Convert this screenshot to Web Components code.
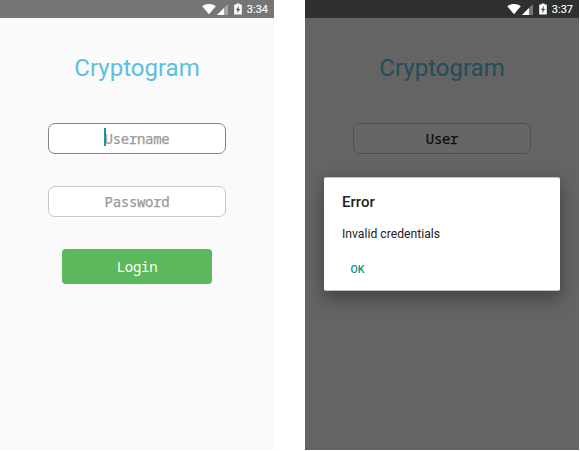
<!DOCTYPE html>
<html lang="en">
<head>
<meta charset="utf-8">
<title>Cryptogram</title>
<style>
html,body{margin:0;background:#fff}
body{width:580px;height:451px;overflow:hidden;display:flex;gap:31px;font-family:Roboto,"Liberation Sans",sans-serif}
</style>
</head>
<body>
<phone-screen time="3:34">
  <app-title>Cryptogram</app-title>
  <text-field focused>Username</text-field>
  <text-field>Password</text-field>
  <push-button>Login</push-button>
</phone-screen>
<phone-screen time="3:37" dimmed>
  <app-title>Cryptogram</app-title>
  <text-field filled>User</text-field>
  <alert-dialog slot="dialog" heading="Error" action="OK">Invalid credentials</alert-dialog>
</phone-screen>
<script>
const define = (name, render) => customElements.define(name, class extends HTMLElement {
  constructor() {
    super();
    const t = document.createElement('template');
    t.innerHTML = render(this);
    this.attachShadow({mode: 'open'}).append(t.content.cloneNode(true));
  }
});

define('status-bar', el => `
<style>
:host{display:flex;height:18px;box-sizing:border-box;padding-right:6px;align-items:center;justify-content:flex-end;background:#757575;color:#fff;font-size:11px;line-height:18px}
:host([dark]){background:#2f2f2f}
svg{display:block;flex:none}
span{padding-top:1px;-webkit-text-stroke:.15px currentColor}
.wifi{margin-right:1px}.cell{margin-right:6px}.battery{margin-right:5px}
</style>
<svg class="wifi" width="14" height="12" viewBox="0 0 14 12"><path d="M.2 3.200C4 .3 10 .3 13.800 3.200L7 11.300z" fill="#fff"/></svg>
<svg class="cell" width="11" height="11" viewBox="0 0 11 11"><path d="M0 11L11 0V11z" fill="#fff" opacity=".35"/><path d="M0 11L7 4V11z" fill="#fff"/></svg>
<svg class="battery" width="8" height="12" viewBox="0 0 8 12"><path d="M2.500.5h3v1H7.200q.6 0 .6.6V10.900q0 .6-.6.6H.8q-.6 0-.6-.6V2.100q0-.6.6-.6H2.500z" fill="#fff"/><path d="M5 2.800L1.900 7H3.600L3.100 10.200L6.300 5.900H4.500z" fill="#555"/></svg>
<span>${el.getAttribute('time')}</span>`);

define('app-title', () => `
<style>:host{display:block;height:30px;line-height:30px;font-size:24px;color:#5bc0de;text-align:center;padding:35px 0 40px}</style>
<slot></slot>`);

define('text-field', () => `
<style>
:host{display:flex;align-items:center;justify-content:center;box-sizing:border-box;width:178px;height:31px;margin:0 auto 32px;border:1px solid #c8c8c8;border-radius:7px;background:#fff;color:#999;font:14px "Droid Sans Mono","Noto Sans Mono","DejaVu Sans Mono",monospace;letter-spacing:-.3px}
:host([focused]){border-color:#79848e}
:host([filled]){color:#222}
.text{position:relative;-webkit-text-stroke:.25px currentColor}
.caret{display:none;position:absolute;left:-1px;top:-1px;width:2px;height:18px;background:#159b8a}
:host([focused]) .caret{display:block}
</style>
<span class="text"><slot></slot><i class="caret"></i></span>`);

define('push-button', () => `
<style>:host{display:flex;align-items:center;justify-content:center;width:150px;height:35px;margin:0 auto;border-radius:4px;background:#5cb85c;color:#fff;font:14px "Droid Sans Mono","Noto Sans Mono","DejaVu Sans Mono",monospace;letter-spacing:-.3px}</style>
<slot></slot>`);

define('alert-dialog', el => `
<style>
:host{display:flex;flex-direction:column;align-items:flex-start;box-sizing:border-box;width:236px;height:114px;padding:15px 18px 0;background:#fff;border:solid #c4c4c4;border-width:1px 0;border-radius:2px;box-shadow:0 8px 18px rgba(0,0,0,.32),0 0 8px rgba(0,0,0,.08);color:#212121}
.h{font-weight:500;font-size:15px;line-height:18px}
.m{font-size:12.2px;line-height:16px;margin-top:15px}
.a{font-weight:500;font-size:10.5px;line-height:14px;color:#009688;margin:21px 0 0 8.5px}
</style>
<span class="h">${el.getAttribute('heading')}</span>
<span class="m"><slot></slot></span>
<span class="a">${el.getAttribute('action')}</span>`);

define('phone-screen', el => {
  const dimmed = el.hasAttribute('dimmed');
  return `
<style>
:host{display:block;position:relative;flex:none;width:274px;height:450px;background:#fafafa;overflow:hidden}
status-bar{position:relative;z-index:1}
.scrim{position:absolute;inset:0;background:rgba(0,0,0,.6);box-sizing:border-box;padding:177px 0 0 19px}
</style>
<status-bar time="${el.getAttribute('time')}"${dimmed ? ' dark' : ''}></status-bar>
<slot></slot>
${dimmed ? '<div class="scrim"><slot name="dialog"></slot></div>' : ''}`;
});
</script>
</body>
</html>
